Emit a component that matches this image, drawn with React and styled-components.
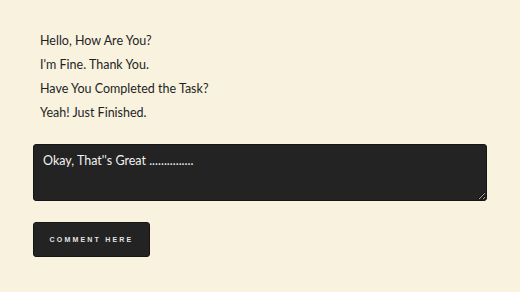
import styled, { createGlobalStyle } from 'styled-components';

const GlobalStyle = createGlobalStyle`
  html, body {
    margin: 0;
    padding: 0;
    background: #f8f2df;
  }
  body {
    font-family: Lato, 'Open Sans', sans-serif;
  }
`;

const Page = styled.div`
  width: 520px;
  height: 292px;
  box-sizing: border-box;
  padding: 29px 33px 0 33px;
  background: #f8f2df;
`;

const Messages = styled.div`
  display: flex;
  flex-direction: column;
  padding-left: 7px;
`;

const Message = styled.p`
  margin: 0;
  font-size: 12.5px;
  line-height: 24px;
  color: #1f1f1f;
`;

const CommentBox = styled.textarea`
  display: block;
  box-sizing: border-box;
  margin-top: 19px;
  width: 454px;
  height: 57px;
  padding: 7px 9px;
  background: #232323;
  color: #f2f2f2;
  border: 1px solid #151515;
  border-radius: 3px;
  font-family: Lato, 'Open Sans', sans-serif;
  font-size: 12.5px;
  line-height: 18px;
  outline: none;
`;

const CommentButton = styled.button`
  display: block;
  box-sizing: border-box;
  margin-top: 21px;
  width: 117px;
  height: 35px;
  padding: 0;
  background: #232323;
  color: #e4e4e4;
  border: 1px solid #151515;
  border-radius: 3px;
  font-family: 'Liberation Sans', Arial, sans-serif;
  font-size: 7px;
  font-weight: bold;
  letter-spacing: 2.2px;
  text-transform: uppercase;
  cursor: pointer;
`;

const messages = [
  'Hello, How Are You?',
  "I'm Fine. Thank You.",
  'Have You Completed the Task?',
  'Yeah! Just Finished.',
];

export default function App() {
  return (
    <Page>
      <GlobalStyle />
      <Messages>
        {messages.map((m) => (
          <Message key={m}>{m}</Message>
        ))}
      </Messages>
      <CommentBox defaultValue="Okay, That''s Great ..............." />
      <CommentButton>Comment here</CommentButton>
    </Page>
  );
}
